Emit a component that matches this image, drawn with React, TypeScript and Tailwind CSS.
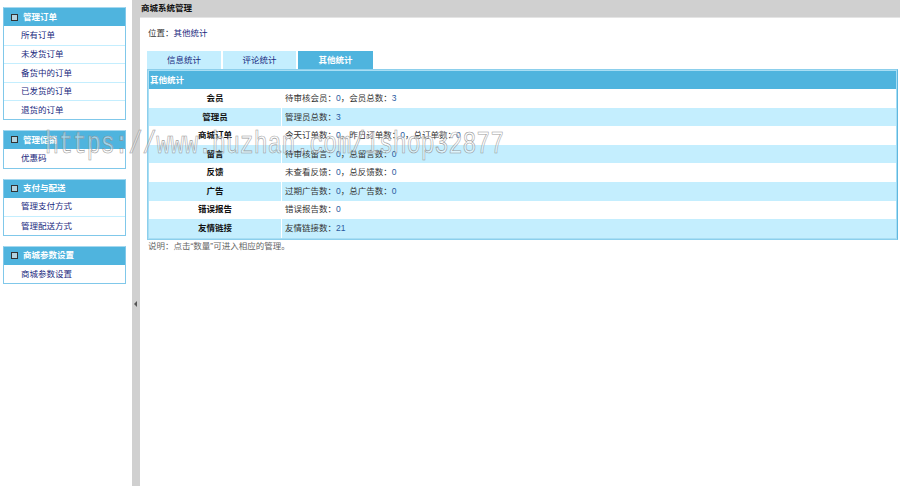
const menus = [
  { title: "管理订单", items: ["所有订单", "未发货订单", "备货中的订单", "已发货的订单", "退货的订单"] },
  { title: "管理促销", items: ["优惠码"] },
  { title: "支付与配送", items: ["管理支付方式", "管理配送方式"] },
  { title: "商城参数设置", items: ["商城参数设置"] },
];

const rows: { name: string; parts: [string, string][] }[] = [
  { name: "会员", parts: [["待审核会员：", "0"], ["，会员总数：", "3"]] },
  { name: "管理员", parts: [["管理员总数：", "3"]] },
  { name: "商城订单", parts: [["今天订单数：", "0"], ["，昨日订单数：", "0"], ["，总订单数：", "0"]] },
  { name: "留言", parts: [["待审核留言：", "0"], ["，总留言数：", "0"]] },
  { name: "反馈", parts: [["未查看反馈：", "0"], ["，总反馈数：", "0"]] },
  { name: "广告", parts: [["过期广告数：", "0"], ["，总广告数：", "0"]] },
  { name: "错误报告", parts: [["错误报告数：", "0"]] },
  { name: "友情链接", parts: [["友情链接数：", "21"]] },
];

function MenuBox({ title, items }: { title: string; items: string[] }) {
  return (
    <div className="w-[123px] border border-[#80c8ea] border-t-[#a5d8ef]">
      <div className="flex h-[18px] items-center bg-[#4fb4de] pl-[7px] font-bold text-white">
        <span className="mr-[5px] h-[7px] w-[7px] border border-[#333] bg-[#b4d2de]" />
        {title}
      </div>
      {items.map((item, i) => (
        <div
          key={item}
          className={`flex h-[18.6px] items-center pl-[17px] text-[#1a2a80] ${i > 0 ? "border-t border-[#c4eefe]" : ""}`}
        >
          {item}
        </div>
      ))}
    </div>
  );
}

export default function App() {
  return (
    <div className="relative flex h-[486px] w-[900px] overflow-hidden bg-white font-['Liberation_Sans','Noto_Sans_CJK_SC',sans-serif] text-[8.5px] text-[#333]">
      <aside className="flex w-[132px] shrink-0 flex-col gap-[10px] pl-[3px] pt-[7px]">
        {menus.map((m) => (
          <MenuBox key={m.title} title={m.title} items={m.items} />
        ))}
      </aside>

      <div className="flex w-[8px] shrink-0 items-center justify-center bg-[#d0d0d0] pt-[121px]">
        <span className="mr-[1px] h-0 w-0 border-y-[3px] border-r-[3px] border-y-transparent border-r-[#555]" />
      </div>

      <main className="flex min-w-0 flex-1 flex-col">
        <div className="flex h-[18px] items-center border-b border-[#e4e4e4] bg-[#d0d0d0] pl-[1px] font-bold text-[#111]">
          商城系统管理
        </div>

        <div className="pl-[7px] pr-[2px]">
          <div className="ml-[1px] mt-[9px] flex h-[12px] items-center">
            位置：<span className="text-[#1a2a80]">其他统计</span>
          </div>

          <div className="mt-[12px] flex h-[18px] gap-[2px]">
            <div className="flex w-[74px] items-center justify-center bg-[#c4eefe] text-[#1a2a80]">信息统计</div>
            <div className="flex w-[73px] items-center justify-center bg-[#c4eefe] text-[#1a2a80]">评论统计</div>
            <div className="flex w-[75px] items-center justify-center bg-[#4fb4de] font-bold text-white">其他统计</div>
          </div>

          <div className="border border-r-[#5fb8e0] border-[#8ccfec] bg-[#a8def4] p-px">
            <div className="flex h-[18px] items-center bg-[#4fb4de] pl-px font-bold text-white">其他统计</div>
            {rows.map((row, i) => (
              <div key={row.name} className={`flex h-[18.6px] items-center ${i % 2 ? "bg-[#c4eefe]" : "bg-white"}`}>
                <div className="flex h-full w-[133px] items-center justify-center border-r border-white font-bold text-[#111]">
                  {row.name}
                </div>
                <div className="pl-[3px]">
                  {row.parts.map(([label, value]) => (
                    <span key={label}>
                      {label}
                      <span className="text-[#2a5aa0]">{value}</span>
                    </span>
                  ))}
                </div>
              </div>
            ))}
          </div>

          <div className="ml-px text-[#666]">说明：点击“数量”可进入相应的管理。</div>
        </div>
      </main>

      {/* 水印 */}
      <div className="absolute left-[45px] top-[128px] origin-center scale-y-[1.35] font-['Liberation_Mono',monospace] text-[23.2px] leading-[34px] text-white/50 opacity-90 [-webkit-text-stroke:0.5px_#909090]">
        https://www.huzhan.com/1shop32877
      </div>
    </div>
  );
}
